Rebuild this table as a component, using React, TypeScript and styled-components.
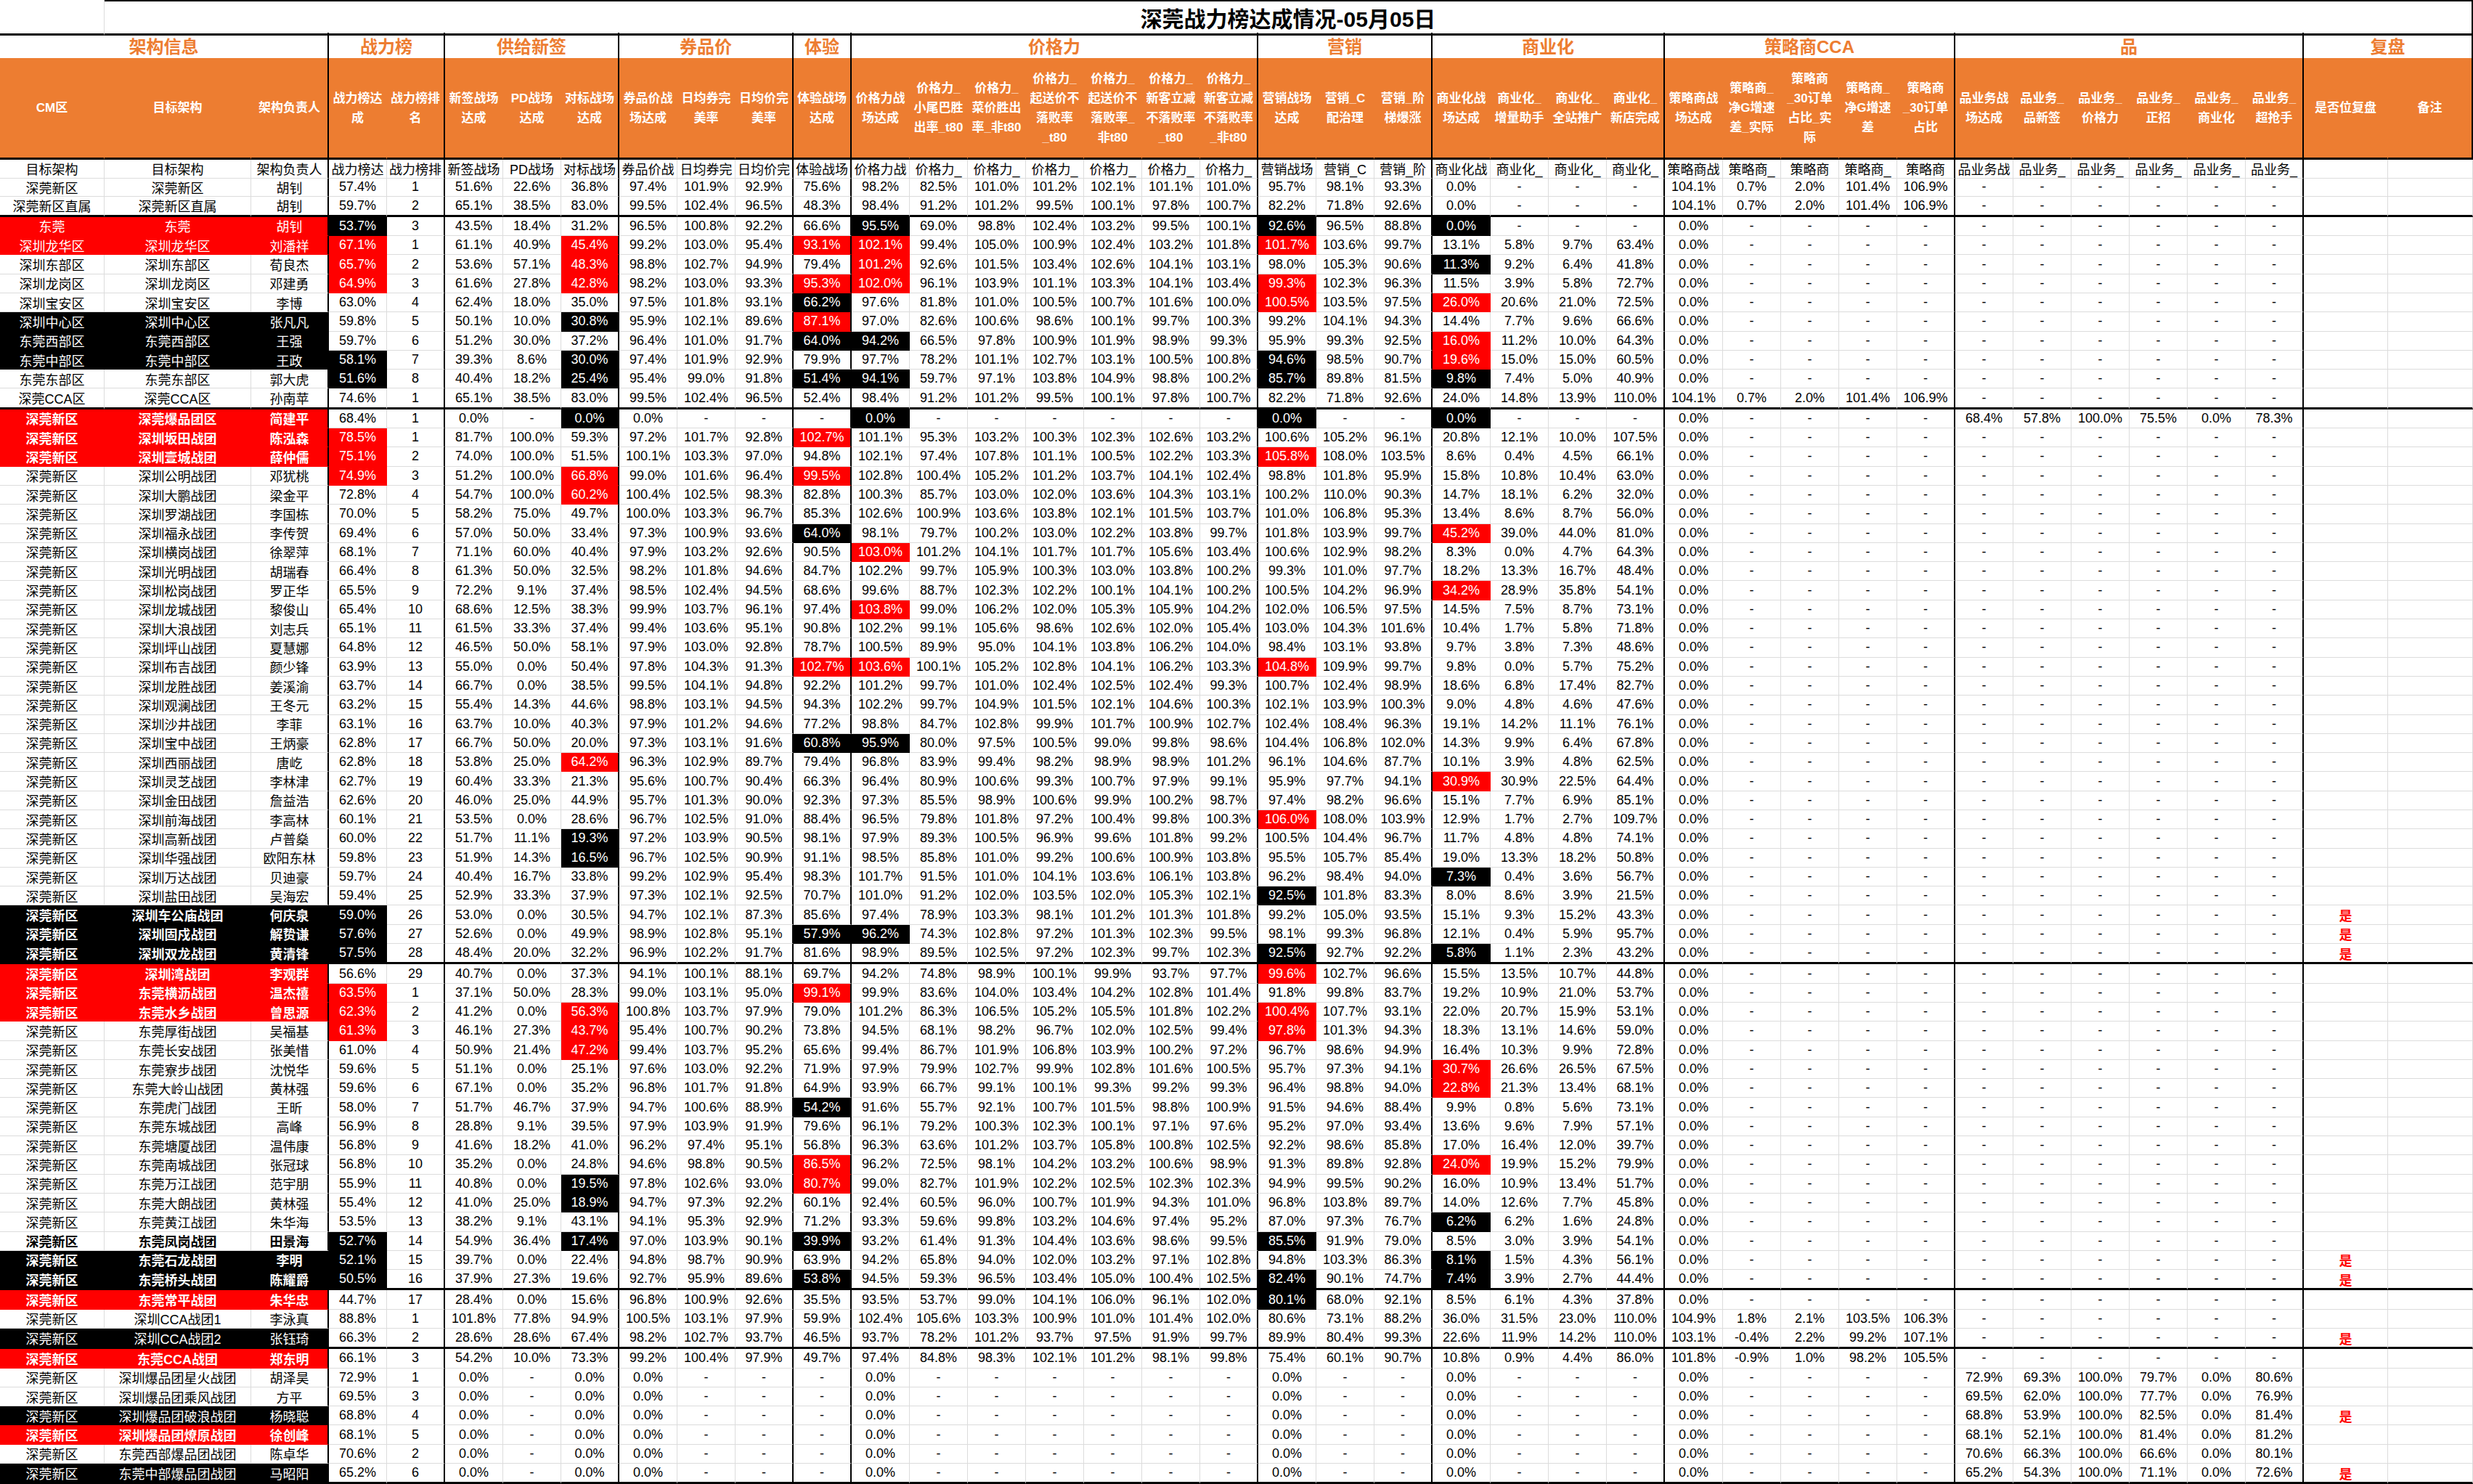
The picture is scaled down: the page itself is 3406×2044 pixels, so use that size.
import React from 'react';
import styled, { createGlobalStyle } from 'styled-components';

const COLS = '144px 202px 107px repeat(34, 80px) 116px 117px';
const GRID = '#dcdcdc';
const ORANGE = '#ED7D31';
const RED = '#FF0000';
const BLACK = '#000000';
const GROUP_END = new Set([2, 4, 7, 10, 11, 18, 21, 25, 30, 36]);
const SEP_AFTER = new Set([2, 12, 41, 58, 61, 68]);

const GlobalStyle = createGlobalStyle`
  html, body { margin: 0; padding: 0; background: #fff; }
  body { font-family: "Liberation Sans", "Noto Sans CJK SC", sans-serif; color: #000; }
`;

const Sheet = styled.div`
  width: 3406px;
  display: flex;
  flex-direction: column;
  background: #fff;
`;

const TitleBar = styled.div`
  display: grid;
  grid-template-columns: 144px 1fr;
  height: 45px;
`;

const Corner = styled.div`
  box-sizing: border-box;
  border-right: 1px solid ${GRID};
  border-bottom: 3px solid #000;
`;

const Title = styled.h1`
  margin: 0;
  box-sizing: border-box;
  border-top: 2px solid #000;
  border-right: 2px solid #000;
  border-bottom: 3px solid #000;
  display: flex;
  align-items: center;
  justify-content: center;
  font-size: 30px;
  font-weight: 700;
  letter-spacing: 0;
`;

const GroupRow = styled.div`
  display: grid;
  grid-template-columns: ${COLS};
  height: 35px;
`;

const GroupCell = styled.div<{ $span: number }>`
  grid-column: span ${(p) => p.$span};
  box-sizing: border-box;
  border-right: 2px solid #000;
  border-bottom: 3px solid #000;
  color: ${ORANGE};
  font-size: 24px;
  font-weight: 700;
  display: flex;
  align-items: center;
  justify-content: center;
`;

const HeadRow = styled.div`
  display: grid;
  grid-template-columns: ${COLS};
  height: 140px;
`;

const HeadCell = styled.div<{ $end?: boolean }>`
  box-sizing: border-box;
  background: ${ORANGE};
  color: #fff;
  font-weight: 700;
  font-size: 17px;
  line-height: 27px;
  text-align: center;
  display: flex;
  flex-direction: column;
  align-items: center;
  justify-content: center;
  white-space: nowrap;
  overflow: hidden;
  border-right: ${(p) => (p.$end ? '2px solid #000' : `1px solid ${ORANGE}`)};
  border-bottom: 3px solid #000;
`;

const Row = styled.div<{ $h: number }>`
  display: grid;
  grid-template-columns: ${COLS};
  height: ${(p) => p.$h}px;
`;

const Cell = styled.div<{ $fill?: string; $end?: boolean; $sep?: boolean; $bold?: boolean; $flag?: boolean }>`
  box-sizing: border-box;
  display: flex;
  align-items: center;
  justify-content: center;
  overflow: hidden;
  white-space: nowrap;
  font-size: 18px;
  background: ${(p) => p.$fill ?? '#fff'};
  color: ${(p) => (p.$fill ? '#fff' : p.$flag ? RED : '#000')};
  font-weight: ${(p) => (p.$bold || p.$flag ? 700 : 400)};
  border-right: ${(p) => (p.$end ? '2px solid #000' : `1px solid ${p.$fill ?? GRID}`)};
  border-bottom: ${(p) => (p.$sep ? '3px solid #000' : `1px solid ${p.$fill ?? GRID}`)};
`;

const GROUPS: [string, number][] = [
  ['架构信息', 3],
  ['战力榜', 2],
  ['供给新签', 3],
  ['券品价', 3],
  ['体验', 1],
  ['价格力', 7],
  ['营销', 3],
  ['商业化', 4],
  ['策略商CCA', 5],
  ['品', 6],
  ['复盘', 2],
];

const HEADERS = [
  'CM区', '目标架构', '架构负责人',
  '战力榜达\n成', '战力榜排\n名',
  '新签战场\n达成', 'PD战场\n达成', '对标战场\n达成',
  '券品价战\n场达成', '日均券完\n美率', '日均价完\n美率',
  '体验战场\n达成',
  '价格力战\n场达成', '价格力_\n小尾巴胜\n出率_t80', '价格力_\n菜价胜出\n率_非t80', '价格力_\n起送价不\n落败率\n_t80', '价格力_\n起送价不\n落败率_\n非t80', '价格力_\n新客立减\n不落败率\n_t80', '价格力_\n新客立减\n不落败率\n_非t80',
  '营销战场\n达成', '营销_C\n配治理', '营销_阶\n梯爆涨',
  '商业化战\n场达成', '商业化_\n增量助手', '商业化_\n全站推广', '商业化_\n新店完成',
  '策略商战\n场达成', '策略商_\n净G增速\n差_实际', '策略商\n_30订单\n占比_实\n际', '策略商_\n净G增速\n差', '策略商\n_30订单\n占比',
  '品业务战\n场达成', '品业务_\n品新签', '品业务_\n价格力', '品业务_\n正招', '品业务_\n商业化', '品业务_\n超抢手',
  '是否位复盘', '备注',
];

const LABELS = [
  '目标架构', '目标架构', '架构负责人', '战力榜达', '战力榜排', '新签战场', 'PD战场', '对标战场',
  '券品价战', '日均券完', '日均价完', '体验战场', '价格力战', '价格力_', '价格力_', '价格力_', '价格力_',
  '价格力_', '价格力_', '营销战场', '营销_C', '营销_阶', '商业化战', '商业化_', '商业化_', '商业化_',
  '策略商战', '策略商_', '策略商', '策略商_', '策略商', '品业务战', '品业务_', '品业务_', '品业务_',
  '品业务_', '品业务_', '', '',
];

const TAIL_CCA = '0.0 - - - -'.split(' ');
const TAIL_PIN = '- - - - - -'.split(' ');
const BP = '0.0 - 0.0 0.0 - - - 0.0 - - - - - - 0.0 - - 0.0 - - - 0.0 - - - -';

const ROWS: string[] = [
  '深莞新区|深莞新区|胡钊|w|57.4 1 51.6 22.6 36.8 97.4 101.9 92.9 75.6 98.2 82.5 101.0 101.2 102.1 101.1 101.0 95.7 98.1 93.3 0.0 - - - 104.1 0.7 2.0 101.4 106.9|',
  '深莞新区直属|深莞新区直属|胡钊|w|59.7 2 65.1 38.5 83.0 99.5 102.4 96.5 48.3 98.4 91.2 101.2 99.5 100.1 97.8 100.7 82.2 71.8 92.6 0.0 - - - 104.1 0.7 2.0 101.4 106.9|',
  '东莞|东莞|胡钊|r|k53.7 3 43.5 18.4 31.2 96.5 100.8 92.2 66.6 k95.5 69.0 98.8 102.4 103.2 99.5 100.1 k92.6 96.5 88.8 k0.0 - - -|',
  '深圳龙华区|深圳龙华区|刘潘祥|r|r67.1 1 61.1 40.9 r45.4 99.2 103.0 95.4 r93.1 r102.1 99.4 105.0 100.9 102.4 103.2 101.8 r101.7 103.6 99.7 13.1 5.8 9.7 63.4|',
  '深圳东部区|深圳东部区|荀良杰|w|r65.7 2 53.6 57.1 r48.3 98.8 102.7 94.9 79.4 r101.2 92.6 101.5 103.4 102.6 104.1 103.1 98.0 105.3 90.6 k11.3 9.2 6.4 41.8|',
  '深圳龙岗区|深圳龙岗区|邓建勇|w|r64.9 3 61.6 27.8 r42.8 98.2 103.0 93.3 r95.3 r102.0 96.1 103.9 101.1 103.3 104.1 103.4 r99.3 102.3 96.3 11.5 3.9 5.8 72.7|',
  '深圳宝安区|深圳宝安区|李博|w|63.0 4 62.4 18.0 35.0 97.5 101.8 93.1 k66.2 97.6 81.8 101.0 100.5 100.7 101.6 100.0 r100.5 103.5 97.5 r26.0 20.6 21.0 72.5|',
  '深圳中心区|深圳中心区|张凡凡|k|59.8 5 50.1 10.0 k30.8 95.9 102.1 89.6 r87.1 97.0 82.6 100.6 98.6 100.1 99.7 100.3 99.2 104.1 94.3 14.4 7.7 9.6 66.6|',
  '东莞西部区|东莞西部区|王强|k|59.7 6 51.2 30.0 37.2 96.4 101.0 91.7 k64.0 k94.2 66.5 97.8 100.9 101.9 98.9 99.3 95.9 99.3 92.5 r16.0 11.2 10.0 64.3|',
  '东莞中部区|东莞中部区|王政|k|k58.1 7 39.3 8.6 k30.0 97.4 101.9 92.9 79.9 97.7 78.2 101.1 102.7 103.1 100.5 100.8 k94.6 98.5 90.7 r19.6 15.0 15.0 60.5|',
  '东莞东部区|东莞东部区|郭大虎|w|k51.6 8 40.4 18.2 k25.4 95.4 99.0 91.8 k51.4 k94.1 59.7 97.1 103.8 104.9 98.8 100.2 k85.7 89.8 81.5 k9.8 7.4 5.0 40.9|',
  '深莞CCA区|深莞CCA区|孙南苹|w|74.6 1 65.1 38.5 83.0 99.5 102.4 96.5 52.4 98.4 91.2 101.2 99.5 100.1 97.8 100.7 82.2 71.8 92.6 24.0 14.8 13.9 110.0 104.1 0.7 2.0 101.4 106.9|',
  '深莞新区|深莞爆品团区|简建平|rB|68.4 1 0.0 - k0.0 0.0 - - - k0.0 - - - - - - k0.0 - - k0.0 - - - 0.0 - - - - 68.4 57.8 100.0 75.5 0.0 78.3|',
  '深莞新区|深圳坂田战团|陈泓森|rB|r78.5 1 81.7 100.0 59.3 97.2 101.7 92.8 r102.7 101.1 95.3 103.2 100.3 102.3 102.6 103.2 100.6 105.2 96.1 20.8 12.1 10.0 107.5|',
  '深莞新区|深圳壹城战团|薛仲儒|rB|r75.1 2 74.0 100.0 51.5 100.1 103.3 97.0 94.8 102.1 97.4 107.8 101.1 100.5 102.2 103.3 r105.8 108.0 103.5 8.6 0.4 4.5 66.1|',
  '深莞新区|深圳公明战团|邓犹桃|w|r74.9 3 51.2 100.0 r66.8 99.0 101.6 96.4 r99.5 102.8 100.4 105.2 101.2 103.7 104.1 102.4 98.8 101.8 95.9 15.8 10.8 10.4 63.0|',
  '深莞新区|深圳大鹏战团|梁金平|w|72.8 4 54.7 100.0 r60.2 100.4 102.5 98.3 82.8 100.3 85.7 103.0 102.0 103.6 104.3 103.1 100.2 110.0 90.3 14.7 18.1 6.2 32.0|',
  '深莞新区|深圳罗湖战团|李国栋|w|70.0 5 58.2 75.0 49.7 100.0 103.3 96.7 85.3 102.6 100.9 103.6 103.8 102.1 101.5 103.7 101.0 106.8 95.3 13.4 8.6 8.7 56.0|',
  '深莞新区|深圳福永战团|李传贺|w|69.4 6 57.0 50.0 33.4 97.3 100.9 93.6 k64.0 98.1 79.7 100.2 103.0 102.2 103.8 99.7 101.8 103.9 99.7 r45.2 39.0 44.0 81.0|',
  '深莞新区|深圳横岗战团|徐翠萍|w|68.1 7 71.1 60.0 40.4 97.9 103.2 92.6 90.5 r103.0 101.2 104.1 101.7 101.7 105.6 103.4 100.6 102.9 98.2 8.3 0.0 4.7 64.3|',
  '深莞新区|深圳光明战团|胡瑞春|w|66.4 8 61.3 50.0 32.5 98.2 101.8 94.6 84.7 102.2 99.7 105.9 100.3 103.0 103.8 100.2 99.3 101.0 97.7 18.2 13.3 16.7 48.4|',
  '深莞新区|深圳松岗战团|罗正华|w|65.5 9 72.2 9.1 37.4 98.5 102.4 94.5 68.6 99.6 88.7 102.3 102.2 100.1 104.1 100.2 100.5 104.2 96.9 r34.2 28.9 35.8 54.1|',
  '深莞新区|深圳龙城战团|黎俊山|w|65.4 10 68.6 12.5 38.3 99.9 103.7 96.1 97.4 r103.8 99.0 106.2 102.0 105.3 105.9 104.2 102.0 106.5 97.5 14.5 7.5 8.7 73.1|',
  '深莞新区|深圳大浪战团|刘志兵|w|65.1 11 61.5 33.3 37.4 99.4 103.6 95.1 90.8 102.2 99.1 105.6 98.6 102.6 102.0 105.4 103.0 104.3 101.6 10.4 1.7 5.8 71.8|',
  '深莞新区|深圳坪山战团|夏慧娜|w|64.8 12 46.5 50.0 58.1 97.9 103.0 92.8 78.7 100.5 89.9 95.0 104.1 103.8 106.2 104.0 98.4 103.1 93.8 9.7 3.8 7.3 48.6|',
  '深莞新区|深圳布吉战团|颜少锋|w|63.9 13 55.0 0.0 50.4 97.8 104.3 91.3 r102.7 r103.6 100.1 105.2 102.8 104.1 106.2 103.3 r104.8 109.9 99.7 9.8 0.0 5.7 75.2|',
  '深莞新区|深圳龙胜战团|姜溪渝|w|63.7 14 66.7 0.0 38.5 99.5 104.1 94.8 92.2 101.2 99.7 101.0 102.4 102.5 102.4 99.3 100.7 102.4 98.9 18.6 6.8 17.4 82.7|',
  '深莞新区|深圳观澜战团|王冬元|w|63.2 15 55.4 14.3 44.6 98.8 103.1 94.5 94.3 102.2 99.7 104.9 101.5 102.1 104.6 100.3 102.1 103.9 100.3 9.0 4.8 4.6 47.6|',
  '深莞新区|深圳沙井战团|李菲|w|63.1 16 63.7 10.0 40.3 97.9 101.2 94.6 77.2 98.8 84.7 102.8 99.9 101.7 100.9 102.7 102.4 108.4 96.3 19.1 14.2 11.1 76.1|',
  '深莞新区|深圳宝中战团|王炳豪|w|62.8 17 66.7 50.0 20.0 97.3 103.1 91.6 k60.8 k95.9 80.0 97.5 100.5 99.0 99.8 98.6 104.4 106.8 102.0 14.3 9.9 6.4 67.8|',
  '深莞新区|深圳西丽战团|唐屹|w|62.8 18 53.8 25.0 r64.2 96.3 102.9 89.7 79.4 96.8 83.9 99.4 98.2 98.9 98.9 101.2 96.1 104.6 87.7 10.1 3.9 4.8 62.5|',
  '深莞新区|深圳灵芝战团|李林津|w|62.7 19 60.4 33.3 21.3 95.6 100.7 90.4 66.3 96.4 80.9 100.6 99.3 100.7 97.9 99.1 95.9 97.7 94.1 r30.9 30.9 22.5 64.4|',
  '深莞新区|深圳金田战团|詹益浩|w|62.6 20 46.0 25.0 44.9 95.7 101.3 90.0 92.3 97.3 85.5 98.9 100.6 99.9 100.2 98.7 97.4 98.2 96.6 15.1 7.7 6.9 85.1|',
  '深莞新区|深圳前海战团|李高林|w|60.1 21 53.5 0.0 28.6 96.7 102.5 91.0 88.4 96.5 79.8 101.8 97.2 100.4 99.8 100.3 r106.0 108.0 103.9 12.9 1.7 2.7 109.7|',
  '深莞新区|深圳高新战团|卢普燊|w|60.0 22 51.7 11.1 k19.3 97.2 103.9 90.5 98.1 97.9 89.3 100.5 96.9 99.6 101.8 99.2 100.5 104.4 96.7 11.7 4.8 4.8 74.1|',
  '深莞新区|深圳华强战团|欧阳东林|w|59.8 23 51.9 14.3 k16.5 96.7 102.5 90.9 91.1 98.5 85.8 101.0 99.2 100.6 100.9 103.8 95.5 105.7 85.4 19.0 13.3 18.2 50.8|',
  '深莞新区|深圳万达战团|贝迪豪|w|59.7 24 40.4 16.7 33.8 99.2 102.9 95.4 98.3 101.7 91.5 101.0 104.1 103.6 106.1 103.8 96.2 98.4 94.0 k7.3 0.4 3.6 56.7|',
  '深莞新区|深圳盐田战团|吴海宏|w|59.4 25 52.9 33.3 37.9 97.3 102.1 92.5 70.7 101.0 91.2 102.0 103.5 102.0 105.3 102.1 k92.5 101.8 83.3 8.0 8.6 3.9 21.5|',
  '深莞新区|深圳车公庙战团|何庆泉|kB|k59.0 26 53.0 0.0 30.5 94.7 102.1 87.3 85.6 97.4 78.9 103.3 98.1 101.2 101.3 101.8 99.2 105.0 93.5 15.1 9.3 15.2 43.3|是',
  '深莞新区|深圳固戍战团|解贽谦|kB|k57.6 27 52.6 0.0 49.9 98.9 102.8 95.1 k57.9 k96.2 74.3 102.8 97.2 101.3 102.3 99.5 98.1 99.3 96.8 12.1 0.4 5.9 95.7|是',
  '深莞新区|深圳双龙战团|黄清锋|kB|k57.5 28 48.4 20.0 32.2 96.9 102.2 91.7 81.6 98.9 89.5 102.5 97.2 102.3 99.7 102.3 k92.5 92.7 92.2 k5.8 1.1 2.3 43.2|是',
  '深莞新区|深圳湾战团|李观群|rB|56.6 29 40.7 0.0 37.3 94.1 100.1 88.1 69.7 94.2 74.8 98.9 100.1 99.9 93.7 97.7 r99.6 102.7 96.6 15.5 13.5 10.7 44.8|',
  '深莞新区|东莞横沥战团|温杰禧|rB|r63.5 1 37.1 50.0 28.3 99.0 103.1 95.0 r99.1 99.9 83.6 104.0 103.4 104.2 102.8 101.4 91.8 99.8 83.7 19.2 10.9 21.0 53.7|',
  '深莞新区|东莞水乡战团|曾思源|rB|r62.3 2 41.2 0.0 r56.3 100.8 103.7 97.9 79.0 101.2 86.3 106.5 105.2 105.5 101.8 102.2 r100.4 107.7 93.1 22.0 20.7 15.9 53.1|',
  '深莞新区|东莞厚街战团|吴福基|w|r61.3 3 46.1 27.3 r43.7 95.4 100.7 90.2 73.8 94.5 68.1 98.2 96.7 102.0 102.5 99.4 r97.8 101.3 94.3 18.3 13.1 14.6 59.0|',
  '深莞新区|东莞长安战团|张美惜|w|61.0 4 50.9 21.4 r47.2 99.4 103.7 95.2 65.6 99.4 86.7 101.9 106.8 103.9 100.2 97.2 96.7 98.6 94.9 16.4 10.3 9.9 72.8|',
  '深莞新区|东莞寮步战团|沈悦华|w|59.6 5 51.1 0.0 25.1 97.6 103.0 92.2 71.9 97.9 79.9 102.7 99.9 102.8 101.6 100.5 95.7 97.3 94.1 r30.7 26.6 26.5 67.5|',
  '深莞新区|东莞大岭山战团|黄林强|w|59.6 6 67.1 0.0 35.2 96.8 101.7 91.8 64.9 93.9 66.7 99.1 100.1 99.3 99.2 99.3 96.4 98.8 94.0 r22.8 21.3 13.4 68.1|',
  '深莞新区|东莞虎门战团|王昕|w|58.0 7 51.7 46.7 37.9 94.7 100.6 88.9 k54.2 91.6 55.7 92.1 100.7 101.5 98.8 100.9 91.5 94.6 88.4 9.9 0.8 5.6 73.1|',
  '深莞新区|东莞东城战团|高峰|w|56.9 8 28.8 9.1 39.5 97.9 103.9 91.9 79.6 96.1 79.2 100.3 102.3 100.1 97.1 97.6 95.2 97.0 93.4 13.6 9.6 7.9 57.1|',
  '深莞新区|东莞塘厦战团|温伟康|w|56.8 9 41.6 18.2 41.0 96.2 97.4 95.1 56.8 96.3 63.6 101.2 103.7 105.8 100.8 102.5 92.2 98.6 85.8 17.0 16.4 12.0 39.7|',
  '深莞新区|东莞南城战团|张冠球|w|56.8 10 35.2 0.0 24.8 94.6 98.8 90.5 r86.5 96.2 72.5 98.1 104.2 103.2 100.6 98.9 91.3 89.8 92.8 r24.0 19.9 15.2 79.9|',
  '深莞新区|东莞万江战团|范宇朋|w|55.9 11 40.8 0.0 k19.5 97.8 102.6 93.0 r80.7 99.0 82.7 101.9 102.2 102.5 102.3 102.3 94.9 99.5 90.2 16.0 10.9 13.4 51.7|',
  '深莞新区|东莞大朗战团|黄林强|w|55.4 12 41.0 25.0 k18.9 94.7 97.3 92.2 60.1 92.4 60.5 96.0 100.7 101.9 94.3 101.0 96.8 103.8 89.7 14.0 12.6 7.7 45.8|',
  '深莞新区|东莞黄江战团|朱华海|w|53.5 13 38.2 9.1 43.1 94.1 95.3 92.9 71.2 93.3 59.6 99.8 103.2 104.6 97.4 95.2 87.0 97.3 76.7 k6.2 6.2 1.6 24.8|',
  '深莞新区|东莞凤岗战团|田景海|wB|k52.7 14 54.9 36.4 k17.4 97.0 103.9 90.1 k39.9 93.2 61.4 91.3 104.4 103.6 98.6 99.5 k85.5 91.9 79.0 8.5 3.0 3.9 54.1|',
  '深莞新区|东莞石龙战团|李明|kB|k52.1 15 39.7 0.0 22.4 94.8 98.7 90.9 63.9 94.2 65.8 94.0 102.0 103.2 97.1 102.8 94.8 103.3 86.3 k8.1 1.5 4.3 56.1|是',
  '深莞新区|东莞桥头战团|陈耀爵|kB|k50.5 16 37.9 27.3 19.6 92.7 95.9 89.6 k53.8 94.5 59.3 96.5 103.4 105.0 100.4 102.5 k82.4 90.1 74.7 k7.4 3.9 2.7 44.4|是',
  '深莞新区|东莞常平战团|朱华忠|rB|44.7 17 28.4 0.0 15.6 96.8 100.9 92.6 35.5 93.5 53.7 99.0 104.1 106.0 96.1 102.0 k80.1 68.0 92.1 8.5 6.1 4.3 37.8|',
  '深莞新区|深圳CCA战团1|李泳真|w|88.8 1 101.8 77.8 94.9 100.5 103.1 97.9 59.9 102.4 105.6 103.3 100.9 101.0 101.4 102.0 80.6 73.1 88.2 36.0 31.5 23.0 110.0 104.9 1.8 2.1 103.5 106.3|',
  '深莞新区|深圳CCA战团2|张钰琦|k|66.3 2 28.6 28.6 67.4 98.2 102.7 93.7 46.5 93.7 78.2 101.2 93.7 97.5 91.9 99.7 89.9 80.4 99.3 22.6 11.9 14.2 110.0 103.1 -0.4 2.2 99.2 107.1|是',
  '深莞新区|东莞CCA战团|郑东明|rB|66.1 3 54.2 10.0 73.3 99.2 100.4 97.9 49.7 97.4 84.8 98.3 102.1 101.2 98.1 99.8 75.4 60.1 90.7 10.8 0.9 4.4 86.0 101.8 -0.9 1.0 98.2 105.5|',
  `深莞新区|深圳爆品团星火战团|胡泽昊|w|72.9 1 ${BP} 72.9 69.3 100.0 79.7 0.0 80.6|`,
  `深莞新区|深圳爆品团乘风战团|方平|w|69.5 3 ${BP} 69.5 62.0 100.0 77.7 0.0 76.9|`,
  `深莞新区|深圳爆品团破浪战团|杨晓聪|k|68.8 4 ${BP} 68.8 53.9 100.0 82.5 0.0 81.4|是`,
  `深莞新区|深圳爆品团燎原战团|徐创峰|rB|68.1 5 ${BP} 68.1 52.1 100.0 81.4 0.0 81.2|`,
  `深莞新区|东莞西部爆品团战团|陈卓华|w|70.6 2 ${BP} 70.6 66.3 100.0 66.6 0.0 80.1|`,
  `深莞新区|东莞中部爆品团战团|马昭阳|k|65.2 6 ${BP} 65.2 54.3 100.0 71.1 0.0 72.6|是`,
];

type Fill = string | undefined;
interface CellData { text: string; fill?: Fill; bold?: boolean; flag?: boolean }

const STYLE_MAP: Record<string, { fill?: string; bold: boolean }> = {
  w: { bold: false },
  wB: { bold: true },
  r: { fill: RED, bold: false },
  rB: { fill: RED, bold: true },
  k: { fill: BLACK, bold: false },
  kB: { fill: BLACK, bold: true },
};

function parseRow(line: string): CellData[] {
  const [cm, target, owner, style, vals, flag] = line.split('|');
  const st = STYLE_MAP[style];
  let toks = vals.trim().split(/\s+/);
  if (toks.length === 23) toks = toks.concat(TAIL_CCA, TAIL_PIN);
  else if (toks.length === 28) toks = toks.concat(TAIL_PIN);
  const cells: CellData[] = [cm, target, owner].map((t) => ({ text: t, fill: st.fill, bold: st.bold }));
  toks.forEach((tok, j) => {
    const m = /^([rk])(.+)$/.exec(tok);
    const fill = m ? (m[1] === 'r' ? RED : BLACK) : undefined;
    const v = m ? m[2] : tok;
    const text = v === '-' ? '-' : j === 1 ? v : `${v}%`;
    cells.push({ text, fill });
  });
  cells.push({ text: flag || '', flag: !!flag });
  cells.push({ text: '' });
  return cells;
}

const BODY: CellData[][] = [LABELS.map((t) => ({ text: t })), ...ROWS.map(parseRow)];

export default function App() {
  return (
    <>
      <GlobalStyle />
      <Sheet>
        <TitleBar>
          <Corner />
          <Title>深莞战力榜达成情况-05月05日</Title>
        </TitleBar>
        <GroupRow>
          {GROUPS.map(([name, span]) => (
            <GroupCell key={name} $span={span}>
              {name}
            </GroupCell>
          ))}
        </GroupRow>
        <HeadRow>
          {HEADERS.map((h, i) => (
            <HeadCell key={i} $end={GROUP_END.has(i) || i === HEADERS.length - 1}>
              {h.split('\n').map((ln, k) => (
                <span key={k}>{ln}</span>
              ))}
            </HeadCell>
          ))}
        </HeadRow>
        {BODY.map((cells, r) => {
          const sep = SEP_AFTER.has(r);
          const base = r <= 2 ? 25.6 : 26.3;
          return (
            <Row key={r} $h={base + (sep ? 2 : 0)}>
              {cells.map((c, i) => (
                <Cell
                  key={i}
                  $fill={c.fill}
                  $bold={c.bold}
                  $flag={c.flag}
                  $end={GROUP_END.has(i)}
                  $sep={sep}
                >
                  {c.text}
                </Cell>
              ))}
            </Row>
          );
        })}
      </Sheet>
    </>
  );
}
